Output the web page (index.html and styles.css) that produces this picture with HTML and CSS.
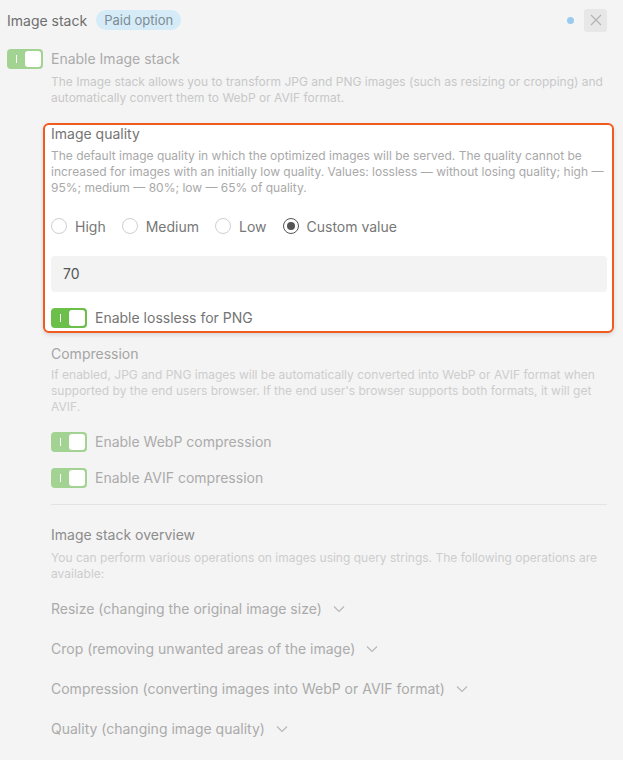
FILE: index.html
```html
<!DOCTYPE html>
<html>
<head>
<meta charset="utf-8">
<link rel="stylesheet" href="styles.css">
</head>
<body>
<div class="panel">
  <div class="header">
    <div class="title">Image stack</div>
    <span class="badge">Paid option</span>
    <span class="spacer"></span>
    <span class="dot"></span>
    <button class="close"><svg width="12" height="12" viewBox="0 0 12 12"><path d="M1 1L11 11M11 1L1 11" stroke="#b4b4b4" stroke-width="1.2" fill="none"/></svg></button>
  </div>

  <div class="row row-main">
    <span class="toggle faded"><span class="mark"></span><span class="knob"></span></span>
    <span class="label faded-label">Enable Image stack</span>
  </div>
  <p class="desc main-desc">The Image stack allows you to transform JPG and PNG images (such as resizing or cropping) and automatically convert them to WebP or AVIF format.</p>

  <div class="section highlight">
    <div class="sec-title dark">Image quality</div>
    <p class="desc mid">The default image quality in which the optimized images will be served. The quality cannot be increased for images with an initially low quality. Values: lossless — without losing quality; high — 95%; medium — 80%; low — 65% of quality.</p>
    <div class="radios">
      <label class="radio"><span class="circle"></span>High</label>
      <label class="radio"><span class="circle"></span>Medium</label>
      <label class="radio"><span class="circle"></span>Low</label>
      <label class="radio"><span class="circle checked"></span>Custom value</label>
    </div>
    <div class="input">70</div>
    <div class="row row-lossless">
      <span class="toggle"><span class="mark"></span><span class="knob"></span></span>
      <span class="label dark">Enable lossless for PNG</span>
    </div>
  </div>

  <div class="section">
    <div class="sec-title faded-title comp-title">Compression</div>
    <p class="desc faint comp-desc">If enabled, JPG and PNG images will be automatically converted into WebP or AVIF format when supported by the end users browser. If the end user's browser supports both formats, it will get AVIF.</p>
    <div class="row row-webp">
      <span class="toggle faded"><span class="mark"></span><span class="knob"></span></span>
      <span class="label faded-label">Enable WebP compression</span>
    </div>
    <div class="row row-avif">
      <span class="toggle faded"><span class="mark"></span><span class="knob"></span></span>
      <span class="label faded-label">Enable AVIF compression</span>
    </div>
    <div class="divider"></div>
    <div class="sec-title overview-title">Image stack overview</div>
    <p class="desc faint ov-desc">You can perform various operations on images using query strings. The following operations are available:</p>
    <div class="accordion">
      <div class="acc-item">Resize (changing the original image size)<svg class="chev" width="12" height="8" viewBox="0 0 12 8"><path d="M1 1.5L6 6.5L11 1.5" stroke="#b8b8b8" stroke-width="1.2" fill="none"/></svg></div>
      <div class="acc-item">Crop (removing unwanted areas of the image)<svg class="chev" width="12" height="8" viewBox="0 0 12 8"><path d="M1 1.5L6 6.5L11 1.5" stroke="#b8b8b8" stroke-width="1.2" fill="none"/></svg></div>
      <div class="acc-item">Compression (converting images into WebP or AVIF format)<svg class="chev" width="12" height="8" viewBox="0 0 12 8"><path d="M1 1.5L6 6.5L11 1.5" stroke="#b8b8b8" stroke-width="1.2" fill="none"/></svg></div>
      <div class="acc-item">Quality (changing image quality)<svg class="chev" width="12" height="8" viewBox="0 0 12 8"><path d="M1 1.5L6 6.5L11 1.5" stroke="#b8b8b8" stroke-width="1.2" fill="none"/></svg></div>
    </div>
  </div>
</div>
</body>
</html>
```

FILE: styles.css
```css
html, body {
  margin: 0;
  padding: 0;
  background: #f4f4f4;
  font-family: Inter, "Noto Sans", sans-serif;
}
.panel {
  padding: 0 16px 40px 7px;
}
.header {
  height: 40px;
  display: flex;
  align-items: center;
}
.title {
  font-size: 14px;
  color: #6e6e6e;
}
.badge {
  margin-left: 9px;
  height: 20px;
  line-height: 20px;
  padding: 0 8px;
  border-radius: 10px;
  background: #d5ebf7;
  color: #7d8b96;
  font-size: 13px;
}
.spacer { flex: 1; }
.dot {
  width: 7px;
  height: 7px;
  border-radius: 50%;
  background: #98cbef;
  margin-right: 10px;
}
.close {
  width: 23px;
  height: 23px;
  border: 0;
  border-radius: 3px;
  background: #e7e7e7;
  padding: 0;
  display: flex;
  align-items: center;
  justify-content: center;
}
.row {
  display: flex;
  align-items: center;
  height: 20px;
}
.row-main { margin-top: 9px; }
.toggle {
  position: relative;
  width: 36px;
  height: 20px;
  border-radius: 4px;
  background: #6cbf4a;
  flex: none;
  box-sizing: border-box;
}
.toggle.faded { background: #a3d393; }
.toggle .knob {
  position: absolute;
  right: 2px;
  top: 2px;
  width: 16px;
  height: 16px;
  border-radius: 3px;
  background: #fff;
}
.toggle .mark {
  position: absolute;
  left: 9px;
  top: 6px;
  width: 1px;
  height: 8px;
  background: #fff;
}
.label {
  margin-left: 8px;
  font-size: 14px;
  line-height: 20px;
}
.faded-label { color: #ababab; }
.dark { color: #747474; }
.desc {
  margin: 0;
  font-size: 12px;
  line-height: 16px;
}
.main-desc {
  margin: 5px 0 0 44px;
  color: #c8c8c8;
}
.section {
  margin-left: 44px;
}
.highlight {
  margin: 17px -7px 0 36px;
  padding: 0 5px 3px 6px;
  border: 2px solid #f35a1d;
  border-radius: 6px;
  background: #fff;
  box-shadow: 0 2px 4px rgba(0,0,0,0.12);
}
.sec-title {
  font-size: 14px;
  line-height: 18px;
}
.mid {
  margin-top: 5px;
  color: #a9a9a9;
}
.radios {
  display: flex;
  align-items: center;
  margin-top: 20px;
  height: 20px;
  gap: 16px;
}
.radio {
  display: flex;
  align-items: center;
  font-size: 14px;
  color: #777;
}
.circle {
  width: 16px;
  height: 16px;
  box-sizing: border-box;
  border: 1px solid #cfcfcf;
  border-radius: 50%;
  margin-right: 8px;
  position: relative;
}
.circle.checked {
  border-color: #555;
}
.circle.checked::after {
  content: "";
  position: absolute;
  left: 3px;
  top: 3px;
  width: 8px;
  height: 8px;
  border-radius: 50%;
  background: #555;
}
.input {
  margin-top: 20px;
  height: 36px;
  line-height: 36px;
  background: #f3f3f3;
  border-radius: 4px;
  padding-left: 12px;
  font-size: 14px;
  color: #555;
}
.row-lossless { margin-top: 16px; }
.comp-title {
  margin-top: 12px;
}
.faded-title { color: #a5a5a5; }
.faint { color: #cdcdcd; }
.comp-desc { margin-top: 4px; }
.row-webp { margin-top: 17px; }
.row-avif { margin-top: 16px; }
.divider {
  margin-top: 16px;
  height: 1px;
  background: #e3e3e3;
}
.overview-title {
  margin-top: 21px;
  color: #8c8c8c;
}
.ov-desc { margin-top: 6px; }
.accordion {
  margin-top: 17px;
  display: flex;
  flex-direction: column;
  gap: 20px;
}
.acc-item {
  height: 20px;
  line-height: 20px;
  font-size: 14px;
  color: #ababab;
  display: flex;
  align-items: center;
}
.chev {
  margin-left: 11px;
}
```
